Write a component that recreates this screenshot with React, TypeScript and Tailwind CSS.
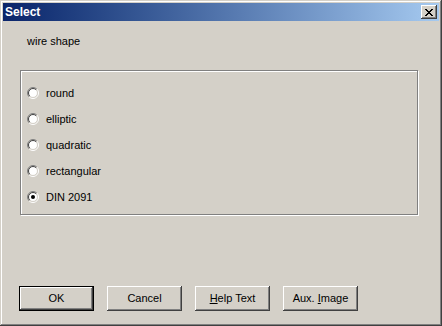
const OPTIONS = ['round', 'elliptic', 'quadratic', 'rectangular', 'DIN 2091'];
const SELECTED = 'DIN 2091';

const CLOSE_GLYPH = ['XX....XX', '.XX..XX.', '..XXXX..', '...XX...', '..XXXX..', '.XX..XX.', 'XX....XX'];

function CloseGlyph() {
  return (
    <svg width="8" height="7" viewBox="0 0 8 7" shapeRendering="crispEdges">
      {CLOSE_GLYPH.flatMap((row, y) =>
        row.split('').map((c, x) => (c === 'X' ? <rect key={`${x}-${y}`} x={x} y={y} width="1" height="1" fill="#000" /> : null)),
      )}
    </svg>
  );
}

function Radio({ checked }: { checked: boolean }) {
  const arc = (r: number) => {
    const d = r * Math.SQRT1_2;
    return { bl: `${6 - d} ${6 + d}`, tr: `${6 + d} ${6 - d}` };
  };
  const o = arc(5.5);
  const i = arc(4.5);
  return (
    <svg width="12" height="12" viewBox="0 0 12 12" className="shrink-0">
      <circle cx="6" cy="6" r="4.5" fill="#fff" />
      <path d={`M${o.bl} A5.5 5.5 0 0 1 ${o.tr}`} fill="none" stroke="#808080" />
      <path d={`M${o.tr} A5.5 5.5 0 0 1 ${o.bl}`} fill="none" stroke="#fff" />
      <path d={`M${i.bl} A4.5 4.5 0 0 1 ${i.tr}`} fill="none" stroke="#404040" />
      <path d={`M${i.tr} A4.5 4.5 0 0 1 ${i.bl}`} fill="none" stroke="#d4d0c8" />
      {checked && <circle cx="6" cy="6" r="2" fill="#000" />}
    </svg>
  );
}

function Button({ children, isDefault }: { children: React.ReactNode; isDefault?: boolean }) {
  return (
    <div
      className={
        isDefault
          ? 'flex h-[25px] w-[75px] border border-black'
          : 'flex h-[25px] w-[75px]'
      }
    >
      <div className="flex flex-1 items-center justify-center shadow-[inset_-1px_-1px_0_#404040,inset_1px_1px_0_#fff,inset_-2px_-2px_0_#808080,inset_2px_2px_0_#d4d0c8]">
        {children}
      </div>
    </div>
  );
}

export default function App() {
  return (
    <div className="flex h-[326px] w-[442px] flex-col bg-[#d4d0c8] p-[3px] font-['Liberation_Sans',Arial,sans-serif] text-[11px] leading-[13px] text-black shadow-[inset_-1px_-1px_0_#404040,inset_1px_1px_0_#d4d0c8,inset_-2px_-2px_0_#808080,inset_2px_2px_0_#fff]">
      <div className="flex h-[18px] items-center justify-between bg-gradient-to-r from-[#0a246a] to-[#a6caf0] pl-[2px] pr-[2px]">
        <span className="text-[12px] font-bold leading-[18px] text-white">Select</span>
        <div className="flex h-[14px] w-[16px] items-center justify-center bg-[#d4d0c8] shadow-[inset_-1px_-1px_0_#404040,inset_1px_1px_0_#fff,inset_-2px_-2px_0_#808080,inset_2px_2px_0_#d4d0c8]">
          <CloseGlyph />
        </div>
      </div>

      <p className="ml-[24px] mt-[14px]">wire shape</p>

      <div className="ml-[17px] mt-[22px] flex h-[145px] w-[398px] flex-col border border-[#808080] pl-[6px] pt-[9px] shadow-[1px_1px_0_#fff,inset_1px_1px_0_#fff]">
        {OPTIONS.map((opt) => (
          <div key={opt} className="flex h-[26px] items-center gap-[7px]">
            <Radio checked={opt === SELECTED} />
            <span>{opt}</span>
          </div>
        ))}
      </div>

      <div className="ml-[16px] mt-[71px] flex gap-[13px]">
        <Button isDefault>OK</Button>
        <Button>Cancel</Button>
        <Button>
          <span>
            <u>H</u>elp Text
          </span>
        </Button>
        <Button>
          <span>
            Aux. <u>I</u>mage
          </span>
        </Button>
      </div>
    </div>
  );
}
